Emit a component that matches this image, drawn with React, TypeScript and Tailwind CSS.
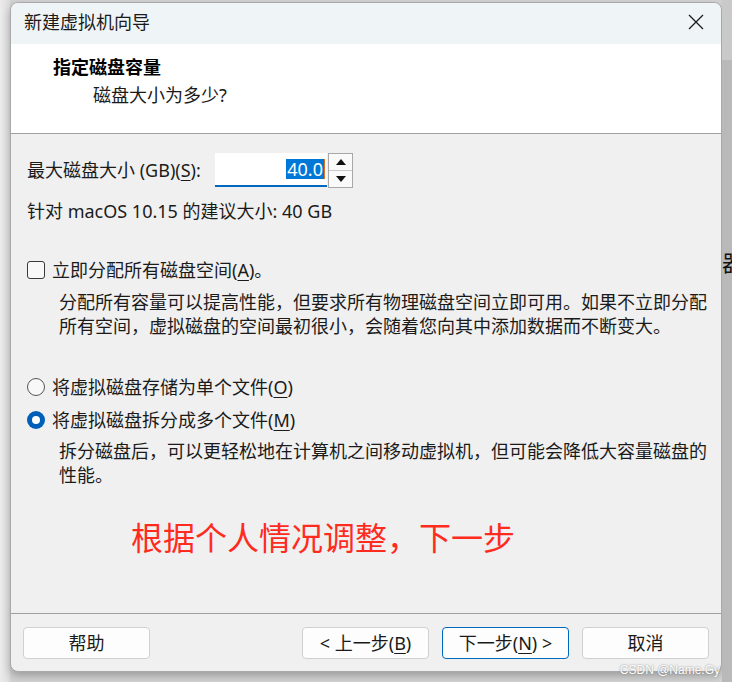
import React from 'react';

const font = "font-['Noto_Sans','Noto_Sans_CJK_SC',sans-serif]";

const U: React.FC<{ children: React.ReactNode }> = ({ children }) => (
  <span className="underline underline-offset-[3px] decoration-1">{children}</span>
);

const Button: React.FC<{ children: React.ReactNode; primary?: boolean }> = ({ children, primary }) => (
  <div
    className={`w-[127px] h-[32px] flex items-center justify-center rounded-[4px] bg-[#fdfdfd] text-[18px] leading-none text-[#1a1a1a] border ${
      primary ? 'border-[#0067c0]' : 'border-[#d0d0d0]'
    }`}
  >
    {children}
  </div>
);

export default function App() {
  return (
    <div className={`relative w-[732px] h-[682px] overflow-hidden flex bg-[#d2d2d2] ${font}`}>
      {/* left desktop strip */}
      <div className="w-[10px] h-full bg-gradient-to-r from-[#ececec] to-[#dcdcdc]" />

      {/* dialog window */}
      <div className="w-[712px] h-[670px] mt-[2px] flex flex-col rounded-t-[8px] rounded-b-[8px] border border-[#a9a9a9] bg-[#f0f0f0] overflow-hidden shadow-[0_4px_8px_rgba(0,0,0,0.25)]">
        {/* title bar */}
        <div className="h-[41px] shrink-0 flex items-center justify-between bg-[#eff4f7] pl-[13px] pr-[17px] pb-[3px]">
          <span className="text-[18px] leading-none text-[#1b1b1b]">新建虚拟机向导</span>
          <svg width="16" height="16" viewBox="0 0 16 16">
            <path d="M1 1 L15 15 M15 1 L1 15" stroke="#1b1b1b" strokeWidth="1.3" fill="none" />
          </svg>
        </div>

        {/* header */}
        <div className="h-[89px] shrink-0 bg-white pt-[11px] pl-[42px]">
          <div className="text-[18px] leading-[24px] font-bold text-black">指定磁盘容量</div>
          <div className="text-[18px] leading-[24px] text-[#1b1b1b] mt-[4px] pl-[40px]">磁盘大小为多少?</div>
        </div>
        <div className="h-px shrink-0 bg-[#a0a0a0]" />

        {/* body */}
        <div className="flex-1 pl-[16px] text-[18px] text-[#1b1b1b]">
          <div className="mt-[19px] h-[34px] flex items-center">
            <span className="w-[188px] leading-[24px]">
              最大磁盘大小 (GB)(<U>S</U>):
            </span>
            <div className="w-[112px] h-[34px] bg-white border-b-2 border-[#0067c0] flex items-center justify-end pr-[2px]">
              <span className="bg-[#0078d7] text-white leading-[20px] px-px">40.0</span>
              <span className="w-px h-[20px] bg-[#e07020]" />
            </div>
            <div className="w-[25px] h-[35px] ml-px border border-[#a8a8a8] bg-[#fafafa] flex flex-col">
              <div className="flex-1 flex items-center justify-center border-b border-[#c8c8c8]">
                <svg width="10" height="6" viewBox="0 0 10 6">
                  <path d="M5 0 L10 6 L0 6 Z" fill="#111" />
                </svg>
              </div>
              <div className="flex-1 flex items-center justify-center">
                <svg width="10" height="6" viewBox="0 0 10 6">
                  <path d="M0 0 L10 0 L5 6 Z" fill="#111" />
                </svg>
              </div>
            </div>
          </div>

          <div className="mt-[12px] leading-[24px]">针对 macOS 10.15 的建议大小: 40 GB</div>

          {/* allocate */}
          <div className="mt-[35px] h-[24px] flex items-center">
            <span className="w-[18px] h-[18px] rounded-[3px] border border-[#3a3a3a] bg-[#f8f8f8]" />
            <span className="ml-[7px] leading-[24px]">
              立即分配所有磁盘空间(<U>A</U>)。
            </span>
          </div>
          <div className="mt-[8px] pl-[32px] leading-[24px] w-[690px]">
            分配所有容量可以提高性能，但要求所有物理磁盘空间立即可用。如果不立即分配
            <br />
            所有空间，虚拟磁盘的空间最初很小，会随着您向其中添加数据而不断变大。
          </div>

          {/* radios */}
          <div className="mt-[37px] h-[24px] flex items-center">
            <span className="w-[18px] h-[18px] rounded-full border border-[#555] bg-[#f8f8f8]" />
            <span className="ml-[7px] leading-[24px]">
              将虚拟磁盘存储为单个文件(<U>O</U>)
            </span>
          </div>
          <div className="mt-[9px] h-[24px] flex items-center">
            <span className="w-[18px] h-[18px] rounded-full bg-[#005fb8] flex items-center justify-center">
              <span className="w-[8px] h-[8px] rounded-full bg-white" />
            </span>
            <span className="ml-[7px] leading-[24px]">
              将虚拟磁盘拆分成多个文件(<U>M</U>)
            </span>
          </div>
          <div className="mt-[7px] pl-[32px] leading-[24px]">
            拆分磁盘后，可以更轻松地在计算机之间移动虚拟机，但可能会降低大容量磁盘的
            <br />
            性能。
          </div>

          <div className="mt-[31px] pl-[104px] text-[32px] leading-[40px] text-[#ff2b1f]">
            根据个人情况调整，下一步
          </div>
        </div>

        <div className="h-px shrink-0 bg-[#a0a0a0]" />

        {/* footer */}
        <div className="h-[57px] shrink-0 flex items-start justify-between pt-[13px] px-[12px]">
          <Button>帮助</Button>
          <div className="flex gap-[13px]">
            <Button>
              &lt; 上一步(<U>B</U>)
            </Button>
            <Button primary>
              下一步(<U>N</U>) &gt;
            </Button>
            <Button>取消</Button>
          </div>
        </div>
      </div>

      {/* right desktop strip */}
      <div className="flex-1 h-full bg-[#b9b9b9] overflow-hidden">
        <div className="h-[60px] bg-[#c9c9c9]" />
        <div className="mt-[188px] text-[22px] leading-[26px] text-[#111] font-['Noto_Sans_CJK_SC',sans-serif]">器</div>
      </div>

      {/* watermark */}
      <div className="absolute right-[12px] bottom-[6px] text-[12px] leading-none text-white [text-shadow:0_0_2px_#777] font-['Liberation_Sans',sans-serif]">
        CSDN @Name.Gy
      </div>
    </div>
  );
}
